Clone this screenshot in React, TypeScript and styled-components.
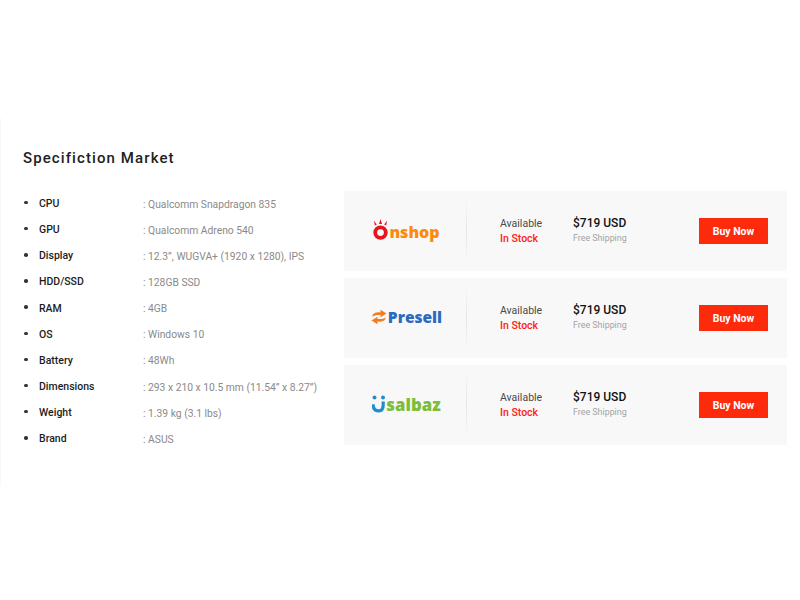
import React from "react";
import styled, { createGlobalStyle } from "styled-components";

const GlobalStyle = createGlobalStyle`
  html, body {
    margin: 0;
    padding: 0;
    background: #fff;
    font-family: Roboto, "Liberation Sans", sans-serif;
  }
`;

const Page = styled.div`
  width: 800px;
  height: 600px;
  padding-top: 118px;
  box-sizing: border-box;
  overflow: hidden;
`;

const Panel = styled.section`
  height: 368px;
  box-sizing: border-box;
  padding: 32px 13px 0 23px;
  border-left: 1px solid #f8f8f8;
`;

const Title = styled.h2`
  margin: 0 0 24px -1px;
  font-size: 15px;
  line-height: 17px;
  font-weight: 500;
  letter-spacing: 1.1px;
  color: #222;
`;

const Columns = styled.div`
  display: flex;
`;

const SpecList = styled.ul`
  width: 320px;
  margin: 0;
  padding: 0;
  list-style: none;
`;

const SpecRow = styled.li`
  display: flex;
  height: 26.15px;
  align-items: center;
  font-size: 10.5px;
  &::before {
    content: "";
    width: 3.5px;
    height: 3.5px;
    margin: -3px 11.5px 0 0;
    border-radius: 50%;
    background: #333;
  }
`;

const SpecLabel = styled.span`
  width: 104px;
  font-weight: 500;
  color: #1c1c1c;
  margin-top: -1px;
`;

const SpecValue = styled.span`
  color: #8a8a8a;
  font-size: 10.3px;
`;

const Market = styled.div`
  width: 443px;
  display: flex;
  flex-direction: column;
  gap: 7px;
`;

const Card = styled.div`
  height: 80px;
  display: flex;
  align-items: center;
  background: #f8f8f8;
`;

const LogoBox = styled.div`
  width: 122px;
  display: flex;
  justify-content: center;
`;

const Divider = styled.div`
  width: 1px;
  height: 64px;
  background: linear-gradient(to bottom, #f8f8f8, #e4e4e4 50%, #f8f8f8);
`;

const Logo = styled.div<{ $lift: number }>`
  display: flex;
  align-items: flex-end;
  margin-left: 3px;
  margin-bottom: ${(p) => p.$lift}px;
`;

const LogoWord = styled.span<{ $color: string; $size: number }>`
  font-family: "Open Sans", sans-serif;
  font-weight: 800;
  font-size: ${(p) => p.$size}px;
  line-height: 16px;
  color: ${(p) => p.$color};
`;

const Stock = styled.div`
  width: 73px;
  margin-left: 33px;
  font-size: 10.5px;
  line-height: 15px;
`;

const StockLabel = styled.div`
  color: #4a4a4a;
`;

const StockState = styled.div`
  color: #fb2412;
  font-weight: 500;
`;

const Price = styled.div`
  width: 126px;
  margin-bottom: 3px;
`;

const Amount = styled.div`
  font-size: 12px;
  line-height: 15px;
  font-weight: 500;
  color: #111;
  margin-bottom: 1px;
`;

const Shipping = styled.div`
  font-size: 8.9px;
  line-height: 12px;
  color: #a3a3a3;
`;

const BuyButton = styled.button`
  width: 69px;
  height: 26px;
  padding: 0;
  border: 0;
  background: #fe2a0c;
  color: #fff;
  font-family: inherit;
  font-size: 10.5px;
  font-weight: 700;
`;

const OnshopLogo = () => (
  <Logo $lift={3}>
    <svg width="16" height="21" viewBox="0 0 16 21">
      <circle cx="7.5" cy="13.6" r="5.3" fill="none" stroke="#e8141e" strokeWidth="3.8" />
      <path d="M1 1.8 3.8 5.4 1.8 6.4Z M7.5 0 9 5H6Z M14 1.8 13.2 6.4 11.2 5.4Z" fill="#e8141e" />
    </svg>
    <LogoWord $color="#fb8a0e" $size={16}>nshop</LogoWord>
  </Logo>
);

const PresellLogo = () => (
  <Logo $lift={2}>
    <svg width="16" height="16" viewBox="0 0 16 16" style={{ marginRight: 1 }}>
      <path d="M1 7.6C2 4.2 4.6 3 9.5 3.4V.8L15.5 4.6 9.5 8.2V6C6.4 5.6 3.6 6.2 1 7.6Z" fill="#f47c20" />
      <path d="M15 8.4C14 11.8 11.4 13 6.5 12.6V15.2L.5 11.4 6.5 7.8V10C9.6 10.4 12.4 9.8 15 8.4Z" fill="#f47c20" />
    </svg>
    <LogoWord $color="#2a6ac0" $size={15.5}>Presell</LogoWord>
  </Logo>
);

const UsalbazLogo = () => (
  <Logo $lift={2}>
    <svg width="14" height="18" viewBox="0 0 14 18">
      <circle cx="2.5" cy="2.5" r="2" fill="#1f8ed0" />
      <circle cx="11" cy="2.5" r="2" fill="#1f8ed0" />
      <path d="M1 9.2C1 13.6 3.2 15.8 6.8 15.8 10.2 15.8 11.2 13.4 11.2 10V6.5" fill="none" stroke="#1f8ed0" strokeWidth="3.2" />
    </svg>
    <LogoWord $color="#7dbd3a" $size={16.8}>salbaz</LogoWord>
  </Logo>
);

const specs = [
  ["CPU", ": Qualcomm Snapdragon 835"],
  ["GPU", ": Qualcomm Adreno 540"],
  ["Display", ": 12.3”, WUGVA+ (1920 x 1280), IPS"],
  ["HDD/SSD", ": 128GB SSD"],
  ["RAM", ": 4GB"],
  ["OS", ": Windows 10"],
  ["Battery", ": 48Wh"],
  ["Dimensions", ": 293 x 210 x 10.5 mm (11.54” x 8.27”)"],
  ["Weight", ": 1.39 kg (3.1 lbs)"],
  ["Brand", ": ASUS"],
];

const shops = [
  { name: "onshop", logo: <OnshopLogo /> },
  { name: "presell", logo: <PresellLogo /> },
  { name: "usalbaz", logo: <UsalbazLogo /> },
];

const App = () => {
  return (
    <Page>
      <GlobalStyle />
      <Panel>
        <Title>Specifiction Market</Title>
        <Columns>
          <SpecList>
            {specs.map(([label, value]) => (
              <SpecRow key={label}>
                <SpecLabel>{label}</SpecLabel>
                <SpecValue>{value}</SpecValue>
              </SpecRow>
            ))}
          </SpecList>
          <Market>
            {shops.map((shop) => (
              <Card key={shop.name}>
                <LogoBox>{shop.logo}</LogoBox>
                <Divider />
                <Stock>
                  <StockLabel>Available</StockLabel>
                  <StockState>In Stock</StockState>
                </Stock>
                <Price>
                  <Amount>$719 USD</Amount>
                  <Shipping>Free Shipping</Shipping>
                </Price>
                <BuyButton>Buy Now</BuyButton>
              </Card>
            ))}
          </Market>
        </Columns>
      </Panel>
    </Page>
  );
};

export default App;
